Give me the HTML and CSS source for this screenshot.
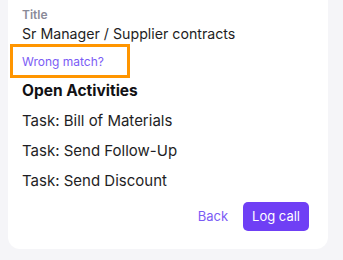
FILE: index.html
```html
<!DOCTYPE html>
<html>
<head>
<meta charset="utf-8">
<link rel="stylesheet" href="styles.css">
</head>
<body>
<div class="card">
  <div class="label">Title</div>
  <div class="value">Sr Manager / Supplier contracts</div>
  <div class="highlight"><a class="link">Wrong match?</a></div>
  <div class="heading">Open Activities</div>
  <ul class="tasks">
    <li>Task: Bill of Materials</li>
    <li>Task: Send Follow-Up</li>
    <li>Task: Send Discount</li>
  </ul>
  <div class="actions">
    <button class="btn-text">Back</button>
    <button class="btn-primary">Log call</button>
  </div>
</div>
</body>
</html>
```
FILE: styles.css
```css
html, body {
  margin: 0;
  padding: 0;
  background: #f5f5f8;
  font-family: Inter, "Noto Sans", sans-serif;
}
.card {
  margin: 0 15px 0 8px;
  width: 320px;
  background: #ffffff;
  border-radius: 0 0 12px 12px;
  padding: 7px 19px 18px 14px;
  box-sizing: border-box;
}
.label {
  font-size: 12px;
  font-weight: 600;
  color: #8a8a98;
  line-height: 16px;
}
.value {
  font-size: 14.2px;
  color: #1e1e24;
  line-height: 20px;
  margin-top: 1px;
}
.highlight {
  margin: 0 0 0 -12px;
  width: 120px;
  height: 34px;
  box-sizing: border-box;
  border: 3px solid #ff9500;
  padding: 7px 0 0 9px;
}
.link {
  font-size: 12px;
  color: #7b5cf5;
  line-height: 16px;
  display: block;
}
.heading {
  font-size: 15.5px;
  font-weight: 700;
  color: #111114;
  line-height: 20px;
  margin-top: 3px;
}
.tasks {
  list-style: none;
  margin: 0;
  padding: 0;
}
.tasks li {
  font-size: 15px;
  color: #1e1e24;
  line-height: 20px;
  margin-top: 10px;
}
.actions {
  display: flex;
  justify-content: flex-end;
  align-items: center;
  gap: 15px;
  margin-top: 10.5px;
}
.btn-text {
  background: none;
  border: none;
  padding: 0;
  font-family: inherit;
  font-size: 13px;
  color: #7b5cf5;
}
.btn-primary {
  background: #6f3ff5;
  color: #ffffff;
  border: none;
  border-radius: 5px;
  font-family: inherit;
  font-size: 13px;
  padding: 0 9px;
  height: 29px;
}
```
